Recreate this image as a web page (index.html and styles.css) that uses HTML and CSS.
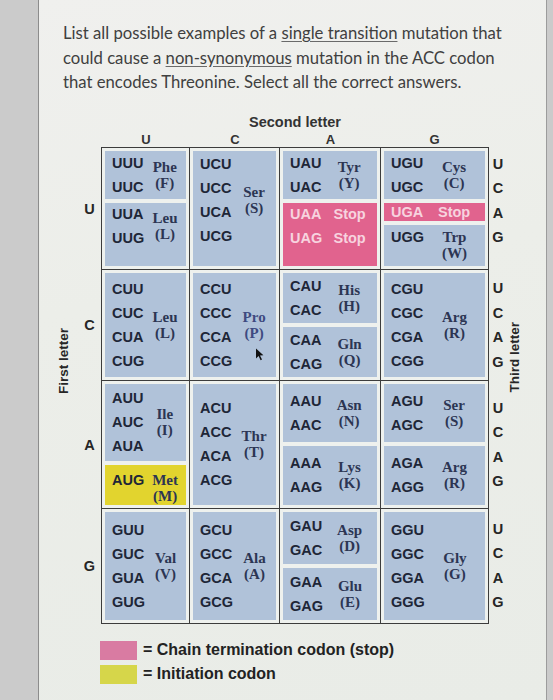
FILE: index.html
```html
<!DOCTYPE html>
<html lang="en">
<head>
    <meta charset="UTF-8">
    <meta name="viewport" content="width=device-width, initial-scale=1.0">
    <title>Genetic Code Question</title>
    <link rel="stylesheet" href="styles.css">
</head>
<body>
    <div class="sheet">
        <p class="question">List all possible examples of a <u>single transition</u> mutation that could cause a <u>non-synonymous</u> mutation in the ACC codon that encodes Threonine. Select all the correct answers.</p>

        <div class="chart">
            <div class="first-title"><span>First letter</span></div>

            <div class="firsts">
                <div class="r-u">U</div>
                <div class="r-c">C</div>
                <div class="r-a">A</div>
                <div class="r-g">G</div>
            </div>

            <div class="table-wrap">
                <div class="second-title">Second letter</div>
                <div class="heads">
                    <div>U</div>
                    <div>C</div>
                    <div>A</div>
                    <div>G</div>
                </div>

                <div class="table">
                    <!-- first letter U -->
                    <div class="trow r-u">
                        <div class="cell">
                            <div class="box h48">
                                <div class="codons"><span>UUU</span><span>UUC</span></div>
                                <div class="aa">Phe<br>(F)</div>
                            </div>
                            <div class="box top">
                                <div class="codons"><span>UUA</span><span>UUG</span></div>
                                <div class="aa">Leu<br>(L)</div>
                            </div>
                        </div>
                        <div class="cell">
                            <div class="box top">
                                <div class="codons"><span>UCU</span><span>UCC</span><span>UCA</span><span>UCG</span></div>
                                <div class="aa">Ser<br>(S)</div>
                            </div>
                        </div>
                        <div class="cell">
                            <div class="box h48">
                                <div class="codons"><span>UAU</span><span>UAC</span></div>
                                <div class="aa">Tyr<br>(Y)</div>
                            </div>
                            <div class="box stop top">
                                <div class="codons"><span>UAA</span><span>UAG</span></div>
                                <div class="aa"><span>Stop</span><span>Stop</span></div>
                            </div>
                        </div>
                        <div class="cell">
                            <div class="box h48">
                                <div class="codons"><span>UGU</span><span>UGC</span></div>
                                <div class="aa">Cys<br>(C)</div>
                            </div>
                            <div class="box stop h18">
                                <div class="codons"><span>UGA</span></div>
                                <div class="aa"><span>Stop</span></div>
                            </div>
                            <div class="box top">
                                <div class="codons"><span>UGG</span></div>
                                <div class="aa lower">Trp<br>(W)</div>
                            </div>
                        </div>
                    </div>

                    <!-- first letter C -->
                    <div class="trow r-c">
                        <div class="cell">
                            <div class="box">
                                <div class="codons"><span>CUU</span><span>CUC</span><span>CUA</span><span>CUG</span></div>
                                <div class="aa">Leu<br>(L)</div>
                            </div>
                        </div>
                        <div class="cell pointer-cell">
                            <div class="box">
                                <div class="codons"><span>CCU</span><span>CCC</span><span>CCA</span><span>CCG</span></div>
                                <div class="aa light">Pro<br>(P)</div>
                            </div>
                            <svg class="pointer" width="9" height="13" viewBox="0 0 9 13">
                                <path d="M1 0.5 L1 10.5 L3.6 8 L5.6 12.2 L7 11.5 L5 7.4 L8.4 7.2 Z" fill="#111"/>
                            </svg>
                        </div>
                        <div class="cell">
                            <div class="box">
                                <div class="codons"><span>CAU</span><span>CAC</span></div>
                                <div class="aa">His<br>(H)</div>
                            </div>
                            <div class="box">
                                <div class="codons"><span>CAA</span><span>CAG</span></div>
                                <div class="aa">Gln<br>(Q)</div>
                            </div>
                        </div>
                        <div class="cell">
                            <div class="box">
                                <div class="codons"><span>CGU</span><span>CGC</span><span>CGA</span><span>CGG</span></div>
                                <div class="aa">Arg<br>(R)</div>
                            </div>
                        </div>
                    </div>

                    <!-- first letter A -->
                    <div class="trow r-a">
                        <div class="cell">
                            <div class="box">
                                <div class="codons"><span>AUU</span><span>AUC</span><span>AUA</span></div>
                                <div class="aa">Ile<br>(I)</div>
                            </div>
                            <div class="box start h40">
                                <div class="codons"><span>AUG</span></div>
                                <div class="aa met">Met<br>(M)</div>
                            </div>
                        </div>
                        <div class="cell">
                            <div class="box">
                                <div class="codons"><span>ACU</span><span>ACC</span><span>ACA</span><span>ACG</span></div>
                                <div class="aa">Thr<br>(T)</div>
                            </div>
                        </div>
                        <div class="cell">
                            <div class="box">
                                <div class="codons"><span>AAU</span><span>AAC</span></div>
                                <div class="aa">Asn<br>(N)</div>
                            </div>
                            <div class="box">
                                <div class="codons"><span>AAA</span><span>AAG</span></div>
                                <div class="aa">Lys<br>(K)</div>
                            </div>
                        </div>
                        <div class="cell">
                            <div class="box">
                                <div class="codons"><span>AGU</span><span>AGC</span></div>
                                <div class="aa">Ser<br>(S)</div>
                            </div>
                            <div class="box">
                                <div class="codons"><span>AGA</span><span>AGG</span></div>
                                <div class="aa">Arg<br>(R)</div>
                            </div>
                        </div>
                    </div>

                    <!-- first letter G -->
                    <div class="trow r-g">
                        <div class="cell">
                            <div class="box">
                                <div class="codons"><span>GUU</span><span>GUC</span><span>GUA</span><span>GUG</span></div>
                                <div class="aa">Val<br>(V)</div>
                            </div>
                        </div>
                        <div class="cell">
                            <div class="box">
                                <div class="codons"><span>GCU</span><span>GCC</span><span>GCA</span><span>GCG</span></div>
                                <div class="aa">Ala<br>(A)</div>
                            </div>
                        </div>
                        <div class="cell">
                            <div class="box">
                                <div class="codons"><span>GAU</span><span>GAC</span></div>
                                <div class="aa">Asp<br>(D)</div>
                            </div>
                            <div class="box">
                                <div class="codons"><span>GAA</span><span>GAG</span></div>
                                <div class="aa">Glu<br>(E)</div>
                            </div>
                        </div>
                        <div class="cell">
                            <div class="box">
                                <div class="codons"><span>GGU</span><span>GGC</span><span>GGA</span><span>GGG</span></div>
                                <div class="aa">Gly<br>(G)</div>
                            </div>
                        </div>
                    </div>
                </div>
            </div>

            <div class="thirds">
                <div class="r-u top"><span>U</span><span>C</span><span>A</span><span>G</span></div>
                <div class="r-c"><span>U</span><span>C</span><span>A</span><span>G</span></div>
                <div class="r-a"><span>U</span><span>C</span><span>A</span><span>G</span></div>
                <div class="r-g"><span>U</span><span>C</span><span>A</span><span>G</span></div>
            </div>

            <div class="third-title"><span>Third letter</span></div>
        </div>

        <div class="legend">
            <div class="legend-row">
                <div class="swatch pink"></div>
                <span>= Chain termination codon (stop)</span>
            </div>
            <div class="legend-row">
                <div class="swatch yellow"></div>
                <span>= Initiation codon</span>
            </div>
        </div>
    </div>
</body>
</html>
```

FILE: styles.css
```css
body {
    margin: 0;
    height: 700px;
    overflow: hidden;
    background-color: #cbcbcb;
    font-family: "Liberation Sans", Arial, sans-serif;
    color: #222;
}
.sheet {
    box-sizing: border-box;
    margin-left: 38px;
    width: 509px;
    height: 700px;
    padding-top: 21px;
    background: linear-gradient(170deg, #f0f0ee 0%, #eceee9 40%, #e9ece7 100%);
    border-left: 1px solid #8c8c8c;
    border-right: 1px solid #9c9c9c;
}
.question {
    margin: 0 0 0 24px;
    width: 450px;
    font-family: Lato, "Open Sans", sans-serif;
    font-size: 16.7px;
    line-height: 24.5px;
    color: #404040;
}
.question u {
    text-decoration-color: #6a6a6a;
    text-underline-offset: 2px;
}

/* Codon chart */
.chart {
    display: flex;
    margin: 17px 0 0 17px;
}
.first-title, .third-title {
    width: 18px;
    font-weight: bold;
    font-size: 13.5px;
    color: #262626;
}
.first-title {
    width: 22px;
    padding-top: 216px;
}
.third-title {
    padding-top: 210px;
}
.first-title span, .third-title span {
    display: inline-block;
    writing-mode: vertical-rl;
    transform: rotate(180deg);
}
.firsts, .thirds {
    padding-top: 36px;
    font-weight: bold;
    font-size: 14.5px;
    color: #262626;
}
.firsts {
    width: 23px;
}
.firsts div {
    display: flex;
    align-items: center;
    justify-content: center;
}
.thirds {
    width: 18px;
}
.thirds div {
    display: flex;
    flex-direction: column;
    justify-content: center;
    align-items: center;
    line-height: 24.5px;
}
.thirds div.top {
    justify-content: flex-start;
    padding-top: 4px;
    box-sizing: border-box;
}
.r-u { height: 122px; }
.r-c { height: 111px; }
.r-a { height: 128px; }
.r-g { height: 114px; }

.table-wrap {
    width: 388px;
}
.second-title {
    height: 20px;
    line-height: 20px;
    text-align: center;
    font-weight: bold;
    font-size: 14.5px;
    color: #333;
}
.heads {
    display: grid;
    grid-template-columns: 88px 90px 101px 107px;
    padding: 0 1px;
    height: 15px;
    line-height: 15px;
    text-align: center;
    font-weight: bold;
    font-size: 13px;
    color: #333;
}
.table {
    box-sizing: border-box;
    border: 1px solid #3c3c3c;
    background-color: #eef1ee;
}
.trow {
    box-sizing: border-box;
    display: grid;
    grid-template-columns: 88px 90px 101px 107px;
    border-bottom: 1px solid #3c3c3c;
}
.trow:last-child {
    border-bottom: none;
}
.cell {
    display: flex;
    flex-direction: column;
    gap: 4px;
    padding: 3px;
    border-right: 1px solid #3c3c3c;
    min-height: 0;
}
.cell:last-child {
    border-right: none;
}
.pointer-cell {
    position: relative;
}
.pointer {
    position: absolute;
    left: 65px;
    top: 78px;
}
.box {
    flex: 1;
    display: flex;
    align-items: center;
    padding-left: 7px;
    background-color: #b0c2d9;
    min-height: 0;
    overflow: hidden;
}
.box.top {
    padding-bottom: 16px;
}
.box.start {
    align-items: flex-start;
    padding-top: 3px;
    background-color: #e2d42e;
}
.box.h48 { flex: 0 0 48px; }
.box.h40 { flex: 0 0 40px; box-sizing: border-box; }
.box.h18 { flex: 0 0 18px; }
.codons {
    display: flex;
    flex-direction: column;
    line-height: 24px;
    font-weight: bold;
    font-size: 14.5px;
    color: #1e2637;
}
.box.h18 .codons, .box.h18 .aa {
    line-height: 18px;
}
.aa {
    flex: 1;
    text-align: center;
    font-family: "Liberation Serif", "Times New Roman", serif;
    font-weight: bold;
    font-size: 15px;
    line-height: 16px;
    color: #2c3553;
}
.aa.light {
    color: #3e4a80;
}
.aa.lower {
    margin-top: 16px;
}
.aa.met {
    margin-top: 4px;
}
.box.stop {
    background-color: #e1638e;
}
.box.stop .codons, .box.stop .aa {
    color: #f7d3df;
}
.box.stop .aa {
    display: flex;
    flex-direction: column;
    font-family: "Liberation Sans", Arial, sans-serif;
    font-size: 14.5px;
    line-height: 24px;
}

/* Legend */
.legend {
    display: flex;
    flex-direction: column;
    gap: 5px;
    margin: 17px 0 0 61px;
}
.legend-row {
    display: flex;
    align-items: center;
    gap: 6px;
    font-weight: bold;
    font-size: 16px;
    color: #222;
}
.swatch {
    width: 37px;
    height: 19px;
}
.swatch.pink {
    background-color: #d97ba2;
}
.swatch.yellow {
    background-color: #d6d64a;
}
```
